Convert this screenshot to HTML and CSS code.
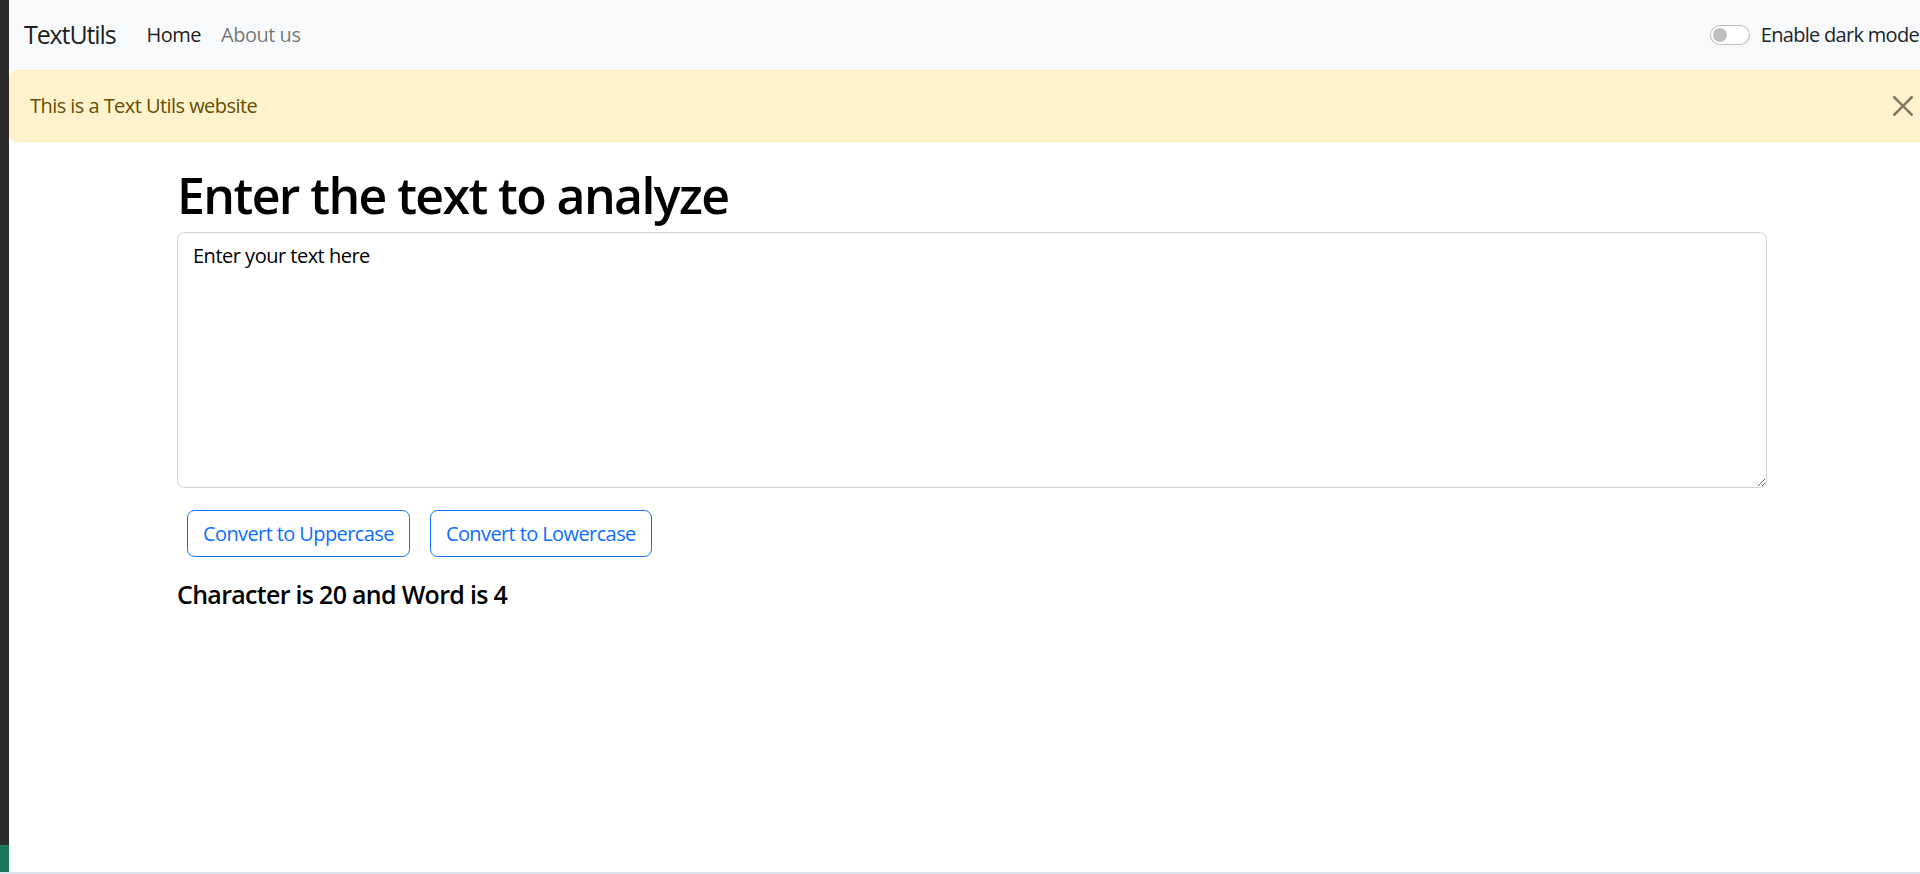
FILE: index.html
```html
<!DOCTYPE html>
<html lang="en">
<head>
<meta charset="utf-8">
<title>TextUtils</title>
<link rel="stylesheet" href="styles.css">
</head>
<body>
<div class="frame">
  <aside class="side">
    <div class="side-dark"></div>
    <div class="side-green"></div>
  </aside>
  <div class="page">
    <nav class="navbar">
      <a class="brand" href="#">TextUtils</a>
      <ul class="nav">
        <li><a class="nav-link active" href="#">Home</a></li>
        <li><a class="nav-link" href="#">About us</a></li>
      </ul>
      <div class="switch">
        <span class="switch-input"><span class="switch-knob"></span></span>
        <label class="switch-label">Enable dark mode</label>
      </div>
    </nav>
    <div class="alert">
      This is a Text Utils website
      <button class="btn-close" type="button" aria-label="Close">
        <svg viewBox="0 0 16 16" width="20" height="20"><path d="M.293.293a1 1 0 0 1 1.414 0L8 6.586 14.293.293a1 1 0 1 1 1.414 1.414L9.414 8l6.293 6.293a1 1 0 0 1-1.414 1.414L8 9.414l-6.293 6.293a1 1 0 0 1-1.414-1.414L6.586 8 .293 1.707a1 1 0 0 1 0-1.414"/></svg>
      </button>
    </div>
    <div class="container">
      <h1 class="title">Enter the text to analyze</h1>
      <textarea class="form-control" rows="8">Enter your text here</textarea>
      <div class="actions">
        <button class="btn" type="button">Convert to Uppercase</button>
        <button class="btn" type="button">Convert to Lowercase</button>
      </div>
    </div>
    <div class="container summary">
      <h5 class="summary-text">Character is 20 and Word is 4</h5>
    </div>
  </div>
</div>
<div class="bottom-line"></div>
</body>
</html>
```

FILE: styles.css
```css
html, body {
  margin: 0;
  padding: 0;
  width: 1920px;
  height: 874px;
  overflow: hidden;
  background: #fff;
  font-family: "Open Sans", "Noto Sans", sans-serif;
  font-size: 20px;
  line-height: 30px;
  color: #212529;
}

.frame {
  display: flex;
  height: 872px;
  overflow: hidden;
}

.side {
  flex: 0 0 9px;
  display: flex;
  flex-direction: column;
}

.side-dark {
  flex: 1;
  background: #2b2b2b;
}

.side-green {
  height: 27px;
  background: #1b7756;
}

.page {
  flex: 0 0 1930px;
  width: 1930px;
}

.bottom-line {
  height: 2px;
  background: #dbe2ee;
}

/* navbar */
.navbar {
  box-sizing: border-box;
  height: 70px;
  display: flex;
  align-items: center;
  padding: 10px 20px 10px 15px;
  background: #f8f9fa;
}

.brand {
  font-size: 25px;
  line-height: 37.5px;
  padding: 6.25px 0;
  margin-right: 21px;
  color: rgba(0, 0, 0, 0.9);
  text-decoration: none;
  letter-spacing: -1.1px;
}

.nav {
  display: flex;
  list-style: none;
  margin: 0;
  padding: 0;
}

.nav-link {
  display: block;
  padding: 10px 10px;
  color: rgba(0, 0, 0, 0.55);
  text-decoration: none;
  letter-spacing: -0.5px;
}

.nav-link.active {
  color: rgba(0, 0, 0, 0.9);
}

.switch {
  margin-left: auto;
  display: flex;
  align-items: center;
}

.switch-input {
  box-sizing: border-box;
  width: 40px;
  height: 20px;
  border: 1px solid rgba(0, 0, 0, 0.25);
  border-radius: 10px;
  background: #fff;
  display: flex;
  align-items: center;
  padding-left: 2px;
  margin-top: -1px;
}

.switch-knob {
  width: 14px;
  height: 14px;
  border-radius: 50%;
  background: #bfbfbf;
}

.switch-label {
  margin-left: 11px;
  color: #212529;
  letter-spacing: -0.7px;
}

/* alert */
.alert {
  position: relative;
  padding: 20px 60px 20px 20px;
  margin-bottom: 20px;
  border: 1px solid #ffecb5;
  border-radius: 7.5px;
  background: #fff3cd;
  color: #664d03;
  letter-spacing: -0.55px;
}

.btn-close {
  position: absolute;
  top: 0;
  right: 0;
  box-sizing: content-box;
  width: 20px;
  height: 20px;
  padding: 25px;
  border: 0;
  background: transparent;
  opacity: 0.5;
  cursor: pointer;
}

.btn-close svg {
  display: block;
  fill: #000;
}

/* content */
.container {
  width: 1590px;
  margin-left: 168px;
}

.title {
  margin: 0 0 10px;
  padding-top: 3px;
  height: 57px;
  font-size: 50px;
  line-height: 60px;
  font-weight: 600;
  color: #000;
  letter-spacing: -1.6px;
}

.form-control {
  display: block;
  box-sizing: border-box;
  width: 100%;
  height: 256px;
  margin: 0 0 22px;
  padding: 7.5px 15px;
  font-family: inherit;
  font-size: 20px;
  line-height: 30px;
  color: #000;
  background: #fff;
  border: 1px solid #ced4da;
  border-radius: 7.5px;
  resize: vertical;
  outline: none;
  letter-spacing: -0.5px;
}

.actions {
  display: flex;
}

.btn {
  margin: 0 10px;
  padding: 7.5px 15px;
  font-family: inherit;
  font-size: 20px;
  line-height: 30px;
  color: #0d6efd;
  background: transparent;
  border: 1px solid #0d6efd;
  border-radius: 7.5px;
  letter-spacing: -0.6px;
}

.summary {
  margin-top: 22px;
}

.summary-text {
  margin: 0;
  font-size: 25px;
  line-height: 30px;
  font-weight: 600;
  color: #000;
  letter-spacing: -0.7px;
}
```
